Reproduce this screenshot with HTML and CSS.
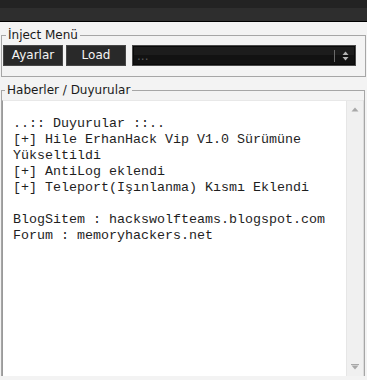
FILE: index.html
```html
<!DOCTYPE html>
<html>
<head>
<meta charset="utf-8">
<link rel="stylesheet" href="styles.css">
</head>
<body>
<div class="titlebar"></div>
<fieldset class="group group-inject">
  <legend class="legend">İnject Menü</legend>
  <div class="toolbar">
    <button class="btn btn-ayarlar">Ayarlar</button>
    <button class="btn btn-load">Load</button>
    <div class="combo">
      <span class="combo-text">...</span>
      <span class="combo-sep"></span>
      <svg class="combo-arrows" width="7" height="10" viewBox="0 0 7 10">
        <path d="M3.5 0.5 L6.5 4 L0.5 4 Z" fill="#b5b5b5"/>
        <path d="M3.5 9.5 L6.5 6 L0.5 6 Z" fill="#b5b5b5"/>
      </svg>
    </div>
  </div>
</fieldset>
<fieldset class="group group-news">
  <legend class="legend">Haberler / Duyurular</legend>
  <div class="textbox">
    <div class="textbox-content">..:: Duyurular ::..
[+] Hile ErhanHack Vip V1.0 Sürümüne Yükseltildi
[+] AntiLog eklendi
[+] Teleport(Işınlanma) Kısmı Eklendi

BlogSitem : hackswolfteams.blogspot.com
Forum : memoryhackers.net</div>
    <div class="scrollbar">
      <svg class="arrow-up" width="8" height="5" viewBox="0 0 8 5"><path d="M4 0.5 L7.5 4.5 L0.5 4.5 Z" fill="#a8a8a8"/></svg>
      <div class="scroll-track"></div>
      <svg class="arrow-down" width="8" height="6" viewBox="0 0 8 6"><rect x="0" y="0" width="8" height="1" fill="#a8a8a8"/><path d="M0.5 1.5 L7.5 1.5 L4 5.5 Z" fill="#a8a8a8"/></svg>
    </div>
  </div>
</fieldset>
</body>
</html>
```
FILE: styles.css
```css
html, body {
  margin: 0;
  padding: 0;
  background: #f3f3f3;
  height: 380px;
  overflow: hidden;
}
body {
  font-family: "DejaVu Sans", Verdana, sans-serif;
  font-size: 12px;
  color: #1a1a1a;
}
.titlebar {
  height: 21px;
  background: linear-gradient(#232323 0, #232323 8px, #2e2e2e 8px, #2e2e2e 100%);
  border-bottom: 1px solid #000;
}
.group {
  margin: 5px 1px 0 1px;
  padding: 2px 1px 10px 1px;
  border: 1px solid #a6a6a6;
  min-width: 0;
}
.legend {
  margin-left: 3px;
  padding: 0 2px;
  line-height: 16px;
  height: 16px;
  color: #1a1a1a;
}
.toolbar {
  display: flex;
  align-items: stretch;
  height: 21px;
}
.btn {
  font-family: "DejaVu Sans", Verdana, sans-serif;
  font-size: 12px;
  color: #f4f4f4;
  background: #292929;
  border: 1px solid #474747;
  width: 60px;
  height: 21px;
  padding: 0;
  margin: 0;
  line-height: 19px;
}
.btn-load {
  margin-left: 3px;
}
.combo {
  margin-left: 6px;
  width: 224px;
  height: 21px;
  box-sizing: border-box;
  border: 1px solid #4a4a4a;
  background: linear-gradient(#1c1c1c 0, #1c1c1c 45%, #121212 45%, #121212 100%);
  box-shadow: inset 0 0 0 1px #0a0a0a;
  display: flex;
  align-items: center;
  padding-left: 4px;
}
.combo-text {
  flex: 1;
  color: #5a5a5a;
  font-size: 12px;
  line-height: 19px;
  padding-top: 2px;
}
.combo-sep {
  width: 1px;
  height: 12px;
  background: #6a6a6a;
  margin-right: 7px;
}
.combo-arrows {
  margin-right: 6px;
}
.group-news {
  margin-right: 2px;
  padding: 2px 0 0 0;
  border-bottom: none;
}
.textbox {
  display: flex;
  height: 276px;
  background: #fff;
  border-left: 1px solid #9a9a9a;
  border-top: 1px solid #e8e8e8;
  border-right: 1px solid #dcdcdc;
  box-sizing: border-box;
  margin-right: 0;
}
.textbox-content {
  flex: 1;
  min-width: 0;
  padding: 15px 0 0 10px;
  font-family: "Liberation Mono", "Courier New", monospace;
  font-size: 13.33px;
  line-height: 16px;
  color: #1e1e1e;
  white-space: pre-wrap;
}
.scrollbar {
  width: 16px;
  background: #f0f0f0;
  border-left: 1px solid #e6e6e6;
  display: flex;
  flex-direction: column;
  align-items: center;
}
.arrow-up {
  margin-top: 6px;
}
.scroll-track {
  flex: 1;
}
.arrow-down {
  margin-bottom: 6px;
}
```
